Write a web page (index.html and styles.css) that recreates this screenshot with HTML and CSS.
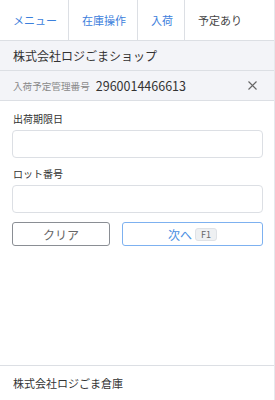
FILE: index.html
```html
<!DOCTYPE html>
<html lang="ja">
<head>
<meta charset="utf-8">
<link rel="stylesheet" href="styles.css">
</head>
<body>
<div class="app">
  <nav class="tabs">
    <a class="tab link t1">メニュー</a>
    <a class="tab link t2">在庫操作</a>
    <a class="tab link t3">入荷</a>
    <span class="tab current">予定あり</span>
  </nav>
  <div class="company">株式会社ロジごまショップ</div>
  <div class="info">
    <span class="info-label">入荷予定管理番号</span>
    <span class="info-value">2960014466613</span>
    <svg class="close" width="9" height="9" viewBox="0 0 9 9"><path d="M0.5 0.5L8.5 8.5M8.5 0.5L0.5 8.5" stroke="#666" stroke-width="1.1" fill="none"/></svg>
  </div>
  <main class="form">
    <label class="field">
      <span class="label">出荷期限日</span>
      <input class="input" type="text">
    </label>
    <label class="field">
      <span class="label">ロット番号</span>
      <input class="input" type="text">
    </label>
    <div class="buttons">
      <button class="btn clear">クリア</button>
      <button class="btn next">次へ<span class="key">F1</span></button>
    </div>
  </main>
  <footer class="footer">株式会社ロジごま倉庫</footer>
</div>
</body>
</html>
```
FILE: styles.css
```css
* { box-sizing: border-box; }
html, body { margin: 0; padding: 0; height: 100%; }
body {
  font-family: "Noto Sans CJK JP", "Noto Sans", sans-serif;
  color: #333;
  background: #fff;
}
.app {
  width: 275px;
  height: 400px;
  border-right: 1px solid #e6e8ec;
  display: flex;
  flex-direction: column;
}
.tabs {
  display: flex;
  height: 41px;
  border-bottom: 1px solid #dcdfe4;
}
.tab {
  display: flex;
  align-items: center;
  padding-left: 13px;
  font-size: 11px;
  border-right: 1px solid #dcdfe4;
}
.t1 { width: 69px; }
.t2 { width: 69px; }
.t3 { width: 47px; }
.current { flex: 1; border-right: none; color: #444; }
.link { color: #3c80dc; }
.company {
  height: 30px;
  background: #f3f4f8;
  border-bottom: 1px solid #dcdfe4;
  display: flex;
  align-items: center;
  padding-left: 13px;
  font-size: 12px;
  color: #333;
}
.info {
  height: 30px;
  background: #f3f4f8;
  border-bottom: 1px solid #dcdfe4;
  display: flex;
  align-items: center;
  padding: 0 13px;
}
.info-label { font-size: 9.6px; color: #888; }
.info-value { font-size: 12.5px; color: #333; margin-left: 6px; }
.close { margin-left: auto; margin-right: 4px; }
.form {
  flex: 1;
  padding: 10px 12px 0 12px;
  display: flex;
  flex-direction: column;
}
.field { display: flex; flex-direction: column; }
.label { font-size: 10px; color: #333; line-height: 16px; margin-left: 1px; margin-bottom: 3px; }
.field + .field { margin-top: 8px; }
.input {
  height: 28px;
  width: 251px;
  border: 1px solid #dcdfe4;
  border-radius: 4px;
  background: #fff;
}
.buttons {
  display: flex;
  gap: 12px;
  margin-top: 9px;
  width: 251px;
}
.btn {
  height: 24px;
  border-radius: 3px;
  background: #fff;
  font-family: inherit;
  font-size: 12px;
  display: flex;
  align-items: center;
  justify-content: center;
  padding: 0;
}
.clear { width: 98px; border: 1px solid #8a8e94; color: #666; }
.next { flex: 1; border: 1px solid #7db1f0; color: #4a8fe2; }
.key {
  font-size: 9px;
  color: #666;
  background: #eef0f2;
  border: 1px solid #dfe2e6;
  border-radius: 3px;
  width: 22px;
  height: 13px;
  display: inline-flex;
  align-items: center;
  justify-content: center;
  margin-left: 3px;
}
.footer {
  height: 35px;
  border-top: 1px solid #dcdfe4;
  display: flex;
  align-items: center;
  padding-left: 13px;
  font-size: 11px;
  color: #333;
}
```
